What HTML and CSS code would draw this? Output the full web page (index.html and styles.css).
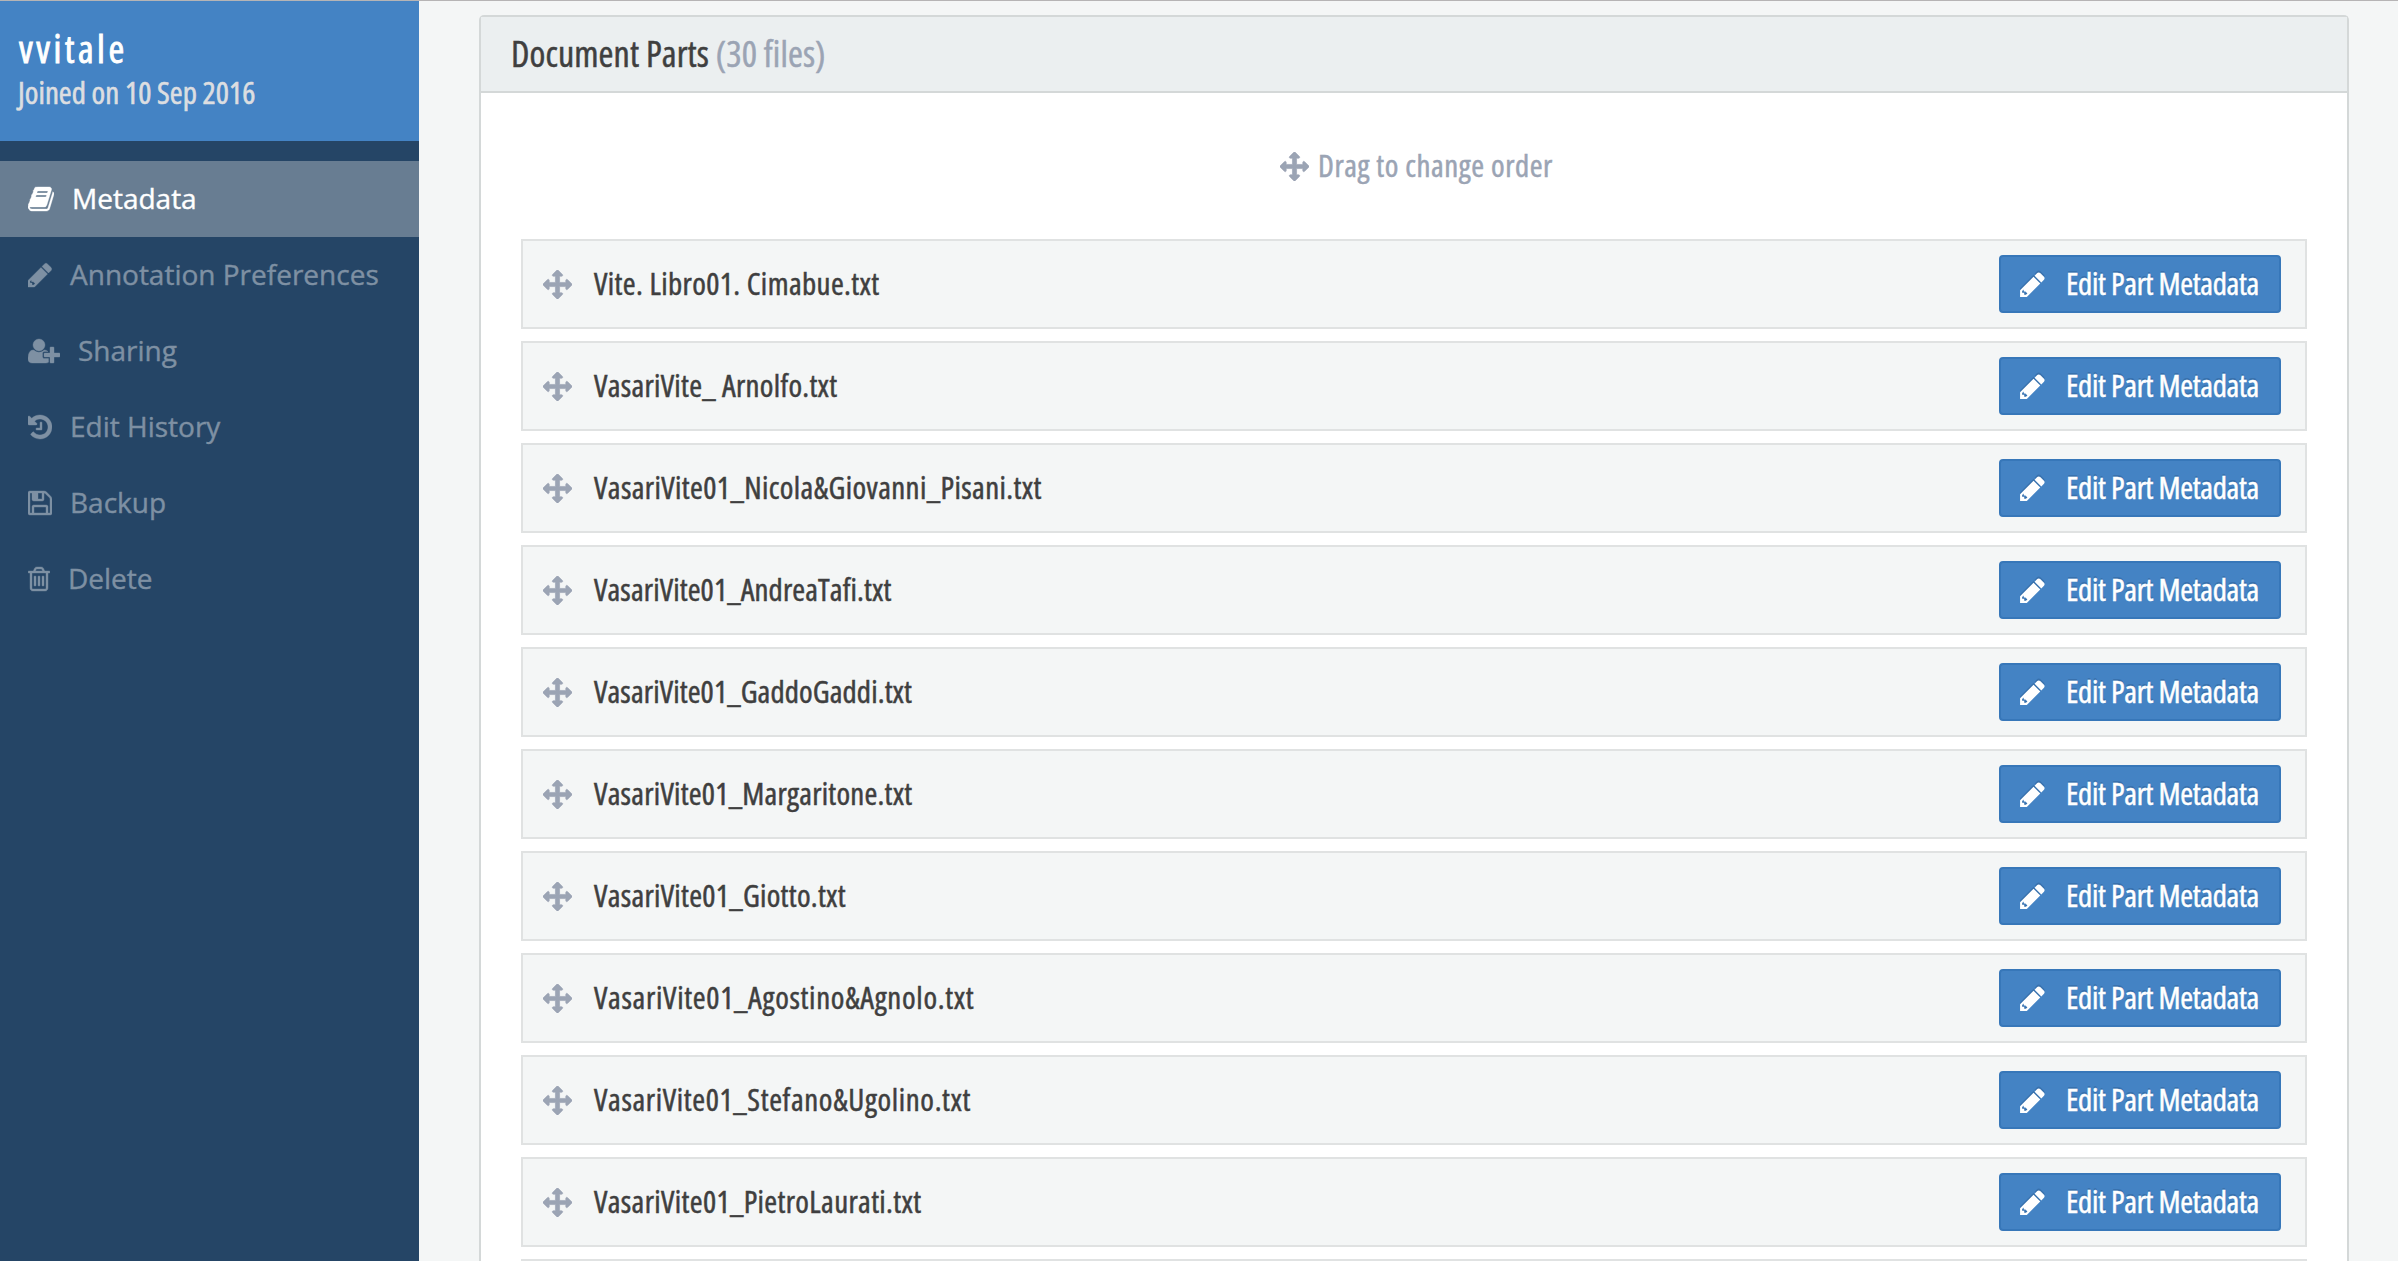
FILE: index.html
```
<!DOCTYPE html>
<html lang="en">
<head>
<meta charset="utf-8">
<title>Document Settings</title>
<link rel="stylesheet" href="styles.css">
</head>
<body>
<svg class="sprite" aria-hidden="true">
  <symbol id="book" viewBox="64 0 1664 1792"><path d="M1703 478q40 57 18 129l-275 906q-19 64-76.5 107.5t-122.5 43.5h-923q-77 0-148.5-53.5t-99.5-131.5q-24-67-2-127 0-4 3-27t4-37q1-8-3-21.5t-3-19.5q2-11 8-21t16.5-23.5 16.5-23.5q23-38 45-91.5t30-91.5q3-10 .5-30t-.5-28q3-11 17-28t17-23q21-36 42-92t25-90q1-9-2.5-32t.5-28q4-13 22-30.5t22-22.5q19-26 42.5-84.5t27.5-96.5q1-8-3-25.5t-2-26.5q2-8 9-18t18-23 17-21q8-12 16.5-30.5t15-35 16-36 19.5-32 26.5-23.5 36-11.5 47.5 5.5l-1 3q38-9 51-9h761q74 0 114 56t18 130l-274 906q-36 119-71.5 153.5t-128.5 34.5h-869q-27 0-38 15-11 16-1 43 24 70 144 70h923q29 0 56-15.5t35-41.5l300-987q7-22 5-57 38 15 59 43zm-1064 2q-4 13 2 22.5t20 9.5h608q13 0 25.5-9.5t16.5-22.5l21-64q4-13-2-22.5t-20-9.5h-608q-13 0-25.5 9.5t-16.5 22.5zm-83 256q-4 13 2 22.5t20 9.5h608q13 0 25.5-9.5t16.5-22.5l21-64q4-13-2-22.5t-20-9.5h-608q-13 0-25.5 9.5t-16.5 22.5z"/></symbol>
  <symbol id="pencil" viewBox="128 0 1536 1792"><path d="M491 1536l91-91-120-120-100 0-15-115-91 91v107h128v128h107zM960 416l416 416-832 832h-416v-416zm683 96q0 53-37 90l-166 166-416-416 166-165q36-38 90-38 53 0 91 38l235 234q37 39 37 91z"/></symbol>
  <symbol id="user-plus" viewBox="0 0 2048 1792"><path d="M704 896q-159 0-271.5-112.5t-112.5-271.5 112.5-271.5 271.5-112.5 271.5 112.5 112.5 271.5-112.5 271.5-271.5 112.5zm960 128h352q13 0 22.5 9.5t9.5 22.5v192q0 13-9.5 22.5t-22.5 9.5h-352v352q0 13-9.5 22.5t-22.5 9.5h-192q-13 0-22.5-9.5t-9.5-22.5v-352h-352q-13 0-22.5-9.5t-9.5-22.5v-192q0-13 9.5-22.5t22.5-9.5h352v-352q0-13 9.5-22.5t22.5-9.5h192q13 0 22.5 9.5t9.5 22.5v352zm-736 224q0 52 38 90t90 38h256v238q-68 50-171 50h-874q-121 0-194-69t-73-190q0-53 3.5-103.5t14-109 26.5-108.5 43-97.5 62-81 85.5-53.5 111.5-20q19 0 39 17 79 61 154.5 91.5t164.5 30.5 164.5-30.5 154.5-91.5q20-17 39-17 132 0 217 96h-223q-52 0-90 38t-38 90v192z"/></symbol>
  <symbol id="history" viewBox="128 0 1536 1792"><path d="M1664 896q0 156-61 298t-164 245-245 164-298 61q-172 0-327-72.5t-264-204.5q-7-10-6.5-22.5t8.5-20.5l137-138q10-9 25-9 16 2 23 12 73 95 179 147t225 52q104 0 198.5-40.5t163.5-109.5 109.5-163.5 40.5-198.5-40.5-198.5-109.5-163.5-163.5-109.5-198.5-40.5q-98 0-188 35.5t-160 101.5l137 138q31 30 14 69-17 40-59 40h-448q-26 0-45-19t-19-45v-448q0-42 40-59 39-17 69 14l130 129q107-101 244.5-156.5t284.5-55.5q156 0 298 61t245 164 164 245 61 298zm-640-288v448q0 14-9 23t-23 9h-320q-14 0-23-9t-9-23v-64q0-14 9-23t23-9h224v-352q0-14 9-23t23-9h64q14 0 23 9t9 23z"/></symbol>
  <symbol id="floppy" viewBox="128 0 1536 1792"><path d="M512 1536h768v-384h-768v384zm896 0h128v-896q0-14-10-38.5t-20-34.5l-281-281q-10-10-34-20t-39-10v416q0 40-28 68t-68 28h-576q-40 0-68-28t-28-68v-416h-128v1280h128v-416q0-40 28-68t68-28h832q40 0 68 28t28 68v416zm-384-928v-320q0-13-9.5-22.5t-22.5-9.5h-192q-13 0-22.5 9.5t-9.5 22.5v320q0 13 9.5 22.5t22.5 9.5h192q13 0 22.5-9.5t9.5-22.5zm640 32v928q0 40-28 68t-68 28h-1344q-40 0-68-28t-28-68v-1344q0-40 28-68t68-28h928q40 0 88 20t76 48l280 280q28 28 48 76t20 88z"/></symbol>
  <symbol id="trash" viewBox="192 0 1408 1792"><path d="M704 736v576q0 14-9 23t-23 9h-64q-14 0-23-9t-9-23v-576q0-14 9-23t23-9h64q14 0 23 9t9 23zm256 0v576q0 14-9 23t-23 9h-64q-14 0-23-9t-9-23v-576q0-14 9-23t23-9h64q14 0 23 9t9 23zm256 0v576q0 14-9 23t-23 9h-64q-14 0-23-9t-9-23v-576q0-14 9-23t23-9h64q14 0 23 9t9 23zm128 724v-948h-896v948q0 22 7 40.5t14.5 27 10.5 8.5h832q3 0 10.5-8.5t14.5-27 7-40.5zm-672-1076h448l-48-117q-7-9-17-11h-317q-10 2-17 11zm928 32v64q0 14-9 23t-23 9h-96v948q0 83-47 143.5t-113 60.5h-832q-66 0-113-58.5t-47-141.5v-952h-96q-14 0-23-9t-9-23v-64q0-14 9-23t23-9h309l70-167q15-37 54-63t79-26h320q40 0 79 26t54 63l70 167h309q14 0 23 9t9 23z"/></symbol>
  <symbol id="arrows" viewBox="0 0 1792 1792"><path d="M1792 896q0 26-19 45l-256 256q-19 19-45 19t-45-19-19-45v-128h-384v384h128q26 0 45 19t19 45-19 45l-256 256q-19 19-45 19t-45-19l-256-256q-19-19-19-45t19-45 45-19h128v-384h-384v128q0 26-19 45t-45 19-45-19l-256-256q-19-19-19-45t19-45l256-256q19-19 45-19t45 19 19 45v128h384v-384h-128q-26 0-45-19t-19-45 19-45l256-256q19-19 45-19t45 19l256 256q19 19 19 45t-19 45-45 19h-128v384h384v-128q0-26 19-45t45-19 45 19l256 256q19 19 19 45z"/></symbol>
</svg>

<div class="app">
  <aside class="sidebar">
    <header class="account">
      <h1 class="account-name">vvitale</h1>
      <p class="account-joined">Joined on 10 Sep 2016</p>
    </header>
    <nav class="menu">
      <a class="menu-item active"><svg class="icon icon-book"><use href="#book"/></svg><span>Metadata</span></a>
      <a class="menu-item"><svg class="icon"><use href="#pencil"/></svg><span>Annotation Preferences</span></a>
      <a class="menu-item"><svg class="icon icon-user"><use href="#user-plus"/></svg><span>Sharing</span></a>
      <a class="menu-item"><svg class="icon"><use href="#history"/></svg><span>Edit History</span></a>
      <a class="menu-item"><svg class="icon"><use href="#floppy"/></svg><span>Backup</span></a>
      <a class="menu-item"><svg class="icon icon-trash"><use href="#trash"/></svg><span>Delete</span></a>
    </nav>
  </aside>

  <main class="content">
    <section class="panel">
      <h2 class="panel-title">Document Parts <span class="count">(30 files)</span></h2>
      <p class="hint"><svg class="arrows"><use href="#arrows"/></svg><span>Drag to change order</span></p>
      <ul class="parts">
        <li class="part"><svg class="arrows"><use href="#arrows"/></svg><span class="name">Vite. Libro01. Cimabue.txt</span><button class="btn"><svg class="pencil"><use href="#pencil"/></svg><span>Edit Part Metadata</span></button></li>
        <li class="part"><svg class="arrows"><use href="#arrows"/></svg><span class="name">VasariVite_ Arnolfo.txt</span><button class="btn"><svg class="pencil"><use href="#pencil"/></svg><span>Edit Part Metadata</span></button></li>
        <li class="part"><svg class="arrows"><use href="#arrows"/></svg><span class="name">VasariVite01_Nicola&amp;Giovanni_Pisani.txt</span><button class="btn"><svg class="pencil"><use href="#pencil"/></svg><span>Edit Part Metadata</span></button></li>
        <li class="part"><svg class="arrows"><use href="#arrows"/></svg><span class="name">VasariVite01_AndreaTafi.txt</span><button class="btn"><svg class="pencil"><use href="#pencil"/></svg><span>Edit Part Metadata</span></button></li>
        <li class="part"><svg class="arrows"><use href="#arrows"/></svg><span class="name">VasariVite01_GaddoGaddi.txt</span><button class="btn"><svg class="pencil"><use href="#pencil"/></svg><span>Edit Part Metadata</span></button></li>
        <li class="part"><svg class="arrows"><use href="#arrows"/></svg><span class="name">VasariVite01_Margaritone.txt</span><button class="btn"><svg class="pencil"><use href="#pencil"/></svg><span>Edit Part Metadata</span></button></li>
        <li class="part"><svg class="arrows"><use href="#arrows"/></svg><span class="name">VasariVite01_Giotto.txt</span><button class="btn"><svg class="pencil"><use href="#pencil"/></svg><span>Edit Part Metadata</span></button></li>
        <li class="part"><svg class="arrows"><use href="#arrows"/></svg><span class="name">VasariVite01_Agostino&amp;Agnolo.txt</span><button class="btn"><svg class="pencil"><use href="#pencil"/></svg><span>Edit Part Metadata</span></button></li>
        <li class="part"><svg class="arrows"><use href="#arrows"/></svg><span class="name">VasariVite01_Stefano&amp;Ugolino.txt</span><button class="btn"><svg class="pencil"><use href="#pencil"/></svg><span>Edit Part Metadata</span></button></li>
        <li class="part"><svg class="arrows"><use href="#arrows"/></svg><span class="name">VasariVite01_PietroLaurati.txt</span><button class="btn"><svg class="pencil"><use href="#pencil"/></svg><span>Edit Part Metadata</span></button></li>
        <li class="part part-cut"></li>
      </ul>
    </section>
  </main>
</div>
</body>
</html>
```
FILE: styles.css
```
* { box-sizing: border-box; }

html, body { height: 100%; }

body {
  margin: 0;
  overflow: hidden;
  background: #f4f6f6;
  color: #3f3f3f;
  font-family: "Open Sans", "Noto Sans", sans-serif;
}

h1, h2, p, ul { margin: 0; padding: 0; font-weight: 400; }
ul { list-style: none; }
svg { flex: none; fill: currentColor; }
.sprite { display: none; }

.app {
  display: flex;
  height: 100vh;
  border-top: 1px solid #b6b4b5;
}

/* Sidebar */
.sidebar {
  flex: none;
  width: 419px;
  background: #254566;
}

.account {
  height: 140px;
  padding: 25px 18px 0;
  background: #4483c4;
  white-space: nowrap;
}

.account-name {
  padding-left: 1px;
  color: #fff;
  font-size: 38px;
  font-stretch: 75%;
  line-height: 44px;
  letter-spacing: 3.5px;
  -webkit-text-stroke: 0.9px currentColor;
}

.account-joined {
  padding-top: 3px;
  color: #dcdee1;
  font-size: 31px;
  font-stretch: 75%;
  line-height: 38px;
  -webkit-text-stroke: 0.6px currentColor;
}

.menu { padding-top: 20px; }

.menu-item {
  display: flex;
  align-items: center;
  gap: 18px;
  height: 76px;
  padding-left: 28px;
  color: #7e90a3;
  font-size: 28px;
  line-height: 38px;
  white-space: nowrap;
}

.menu-item span {
  padding-bottom: 2px;
  -webkit-text-stroke: 0.4px currentColor;
}

.menu-item.active {
  background: #687d92;
  color: #fff;
}

.icon {
  width: 24px;
  height: 28px;
  overflow: visible;
  stroke: currentColor;
  stroke-width: 24;
}

.icon-book { width: 26px; }
.icon-user { width: 32px; }
.icon-trash { width: 22px; }

/* Document parts panel */
.content {
  flex: 1;
  min-width: 0;
  padding: 14px 49px 0 60px;
}

.panel {
  height: 100%;
  border: 2px solid #d4d8d8;
  border-bottom: 0;
  border-radius: 5px 5px 0 0;
  background: #fff;
}

.panel-title {
  height: 76px;
  padding: 0 30px;
  border-bottom: 2px solid #d4d8d8;
  background: #ebeff0;
  font-size: 36px;
  font-stretch: 75%;
  line-height: 73px;
  letter-spacing: 0.1px;
  -webkit-text-stroke: 0.5px currentColor;
}

.count { color: #9ba4b4; }

.hint {
  display: flex;
  align-items: center;
  justify-content: center;
  gap: 9px;
  height: 146px;
  padding-left: 5px;
  color: #9ba4b4;
  font-size: 31px;
  font-stretch: 75%;
  letter-spacing: 0.55px;
  -webkit-text-stroke: 0.5px currentColor;
}

.hint span { padding-bottom: 3px; }

.arrows {
  width: 29px;
  height: 29px;
  overflow: visible;
  color: #9ba4b4;
  stroke: currentColor;
  stroke-width: 40;
}

.parts {
  display: grid;
  gap: 12px;
  padding: 0 40px;
}

.part {
  display: flex;
  align-items: center;
  height: 90px;
  padding: 0 24px 0 20px;
  border: 2px solid #e0e2e2;
  background: #f4f6f6;
  font-size: 31px;
  font-stretch: 75%;
}

/* Only the top edge of the next row is in view */
.part-cut {
  height: 2px;
  padding: 0;
  border-bottom: 0;
}

.name {
  margin-left: 22px;
  padding-bottom: 2px;
  white-space: nowrap;
  letter-spacing: 0.38px;
  -webkit-text-stroke: 0.5px currentColor;
}

.part:nth-child(2) .name,
.part:nth-child(7) .name { letter-spacing: 0.28px; }
.part:nth-child(4) .name,
.part:nth-child(5) .name { letter-spacing: 0.11px; }
.part:nth-child(6) .name { letter-spacing: 0.23px; }
.part:nth-child(8) .name { letter-spacing: 0.68px; }
.part:nth-child(9) .name { letter-spacing: 0.62px; }
.part:nth-child(10) .name { letter-spacing: 0.34px; }

.btn {
  display: flex;
  align-items: center;
  gap: 21px;
  width: 282px;
  height: 58px;
  margin-left: auto;
  padding: 0 0 0 19px;
  border: 2px solid #3777b9;
  border-radius: 4px;
  background: #4483c4;
  color: #fff;
  font: inherit;
  line-height: 40px;
  letter-spacing: -0.32px;
  white-space: nowrap;
  text-shadow: 0 -2px 0 #3871ad;
  -webkit-text-stroke: 0.5px currentColor;
}

.btn span { padding-bottom: 2px; }

.pencil {
  width: 25px;
  height: 29px;
  filter: drop-shadow(0 -2px 0 #3871ad);
}
```
